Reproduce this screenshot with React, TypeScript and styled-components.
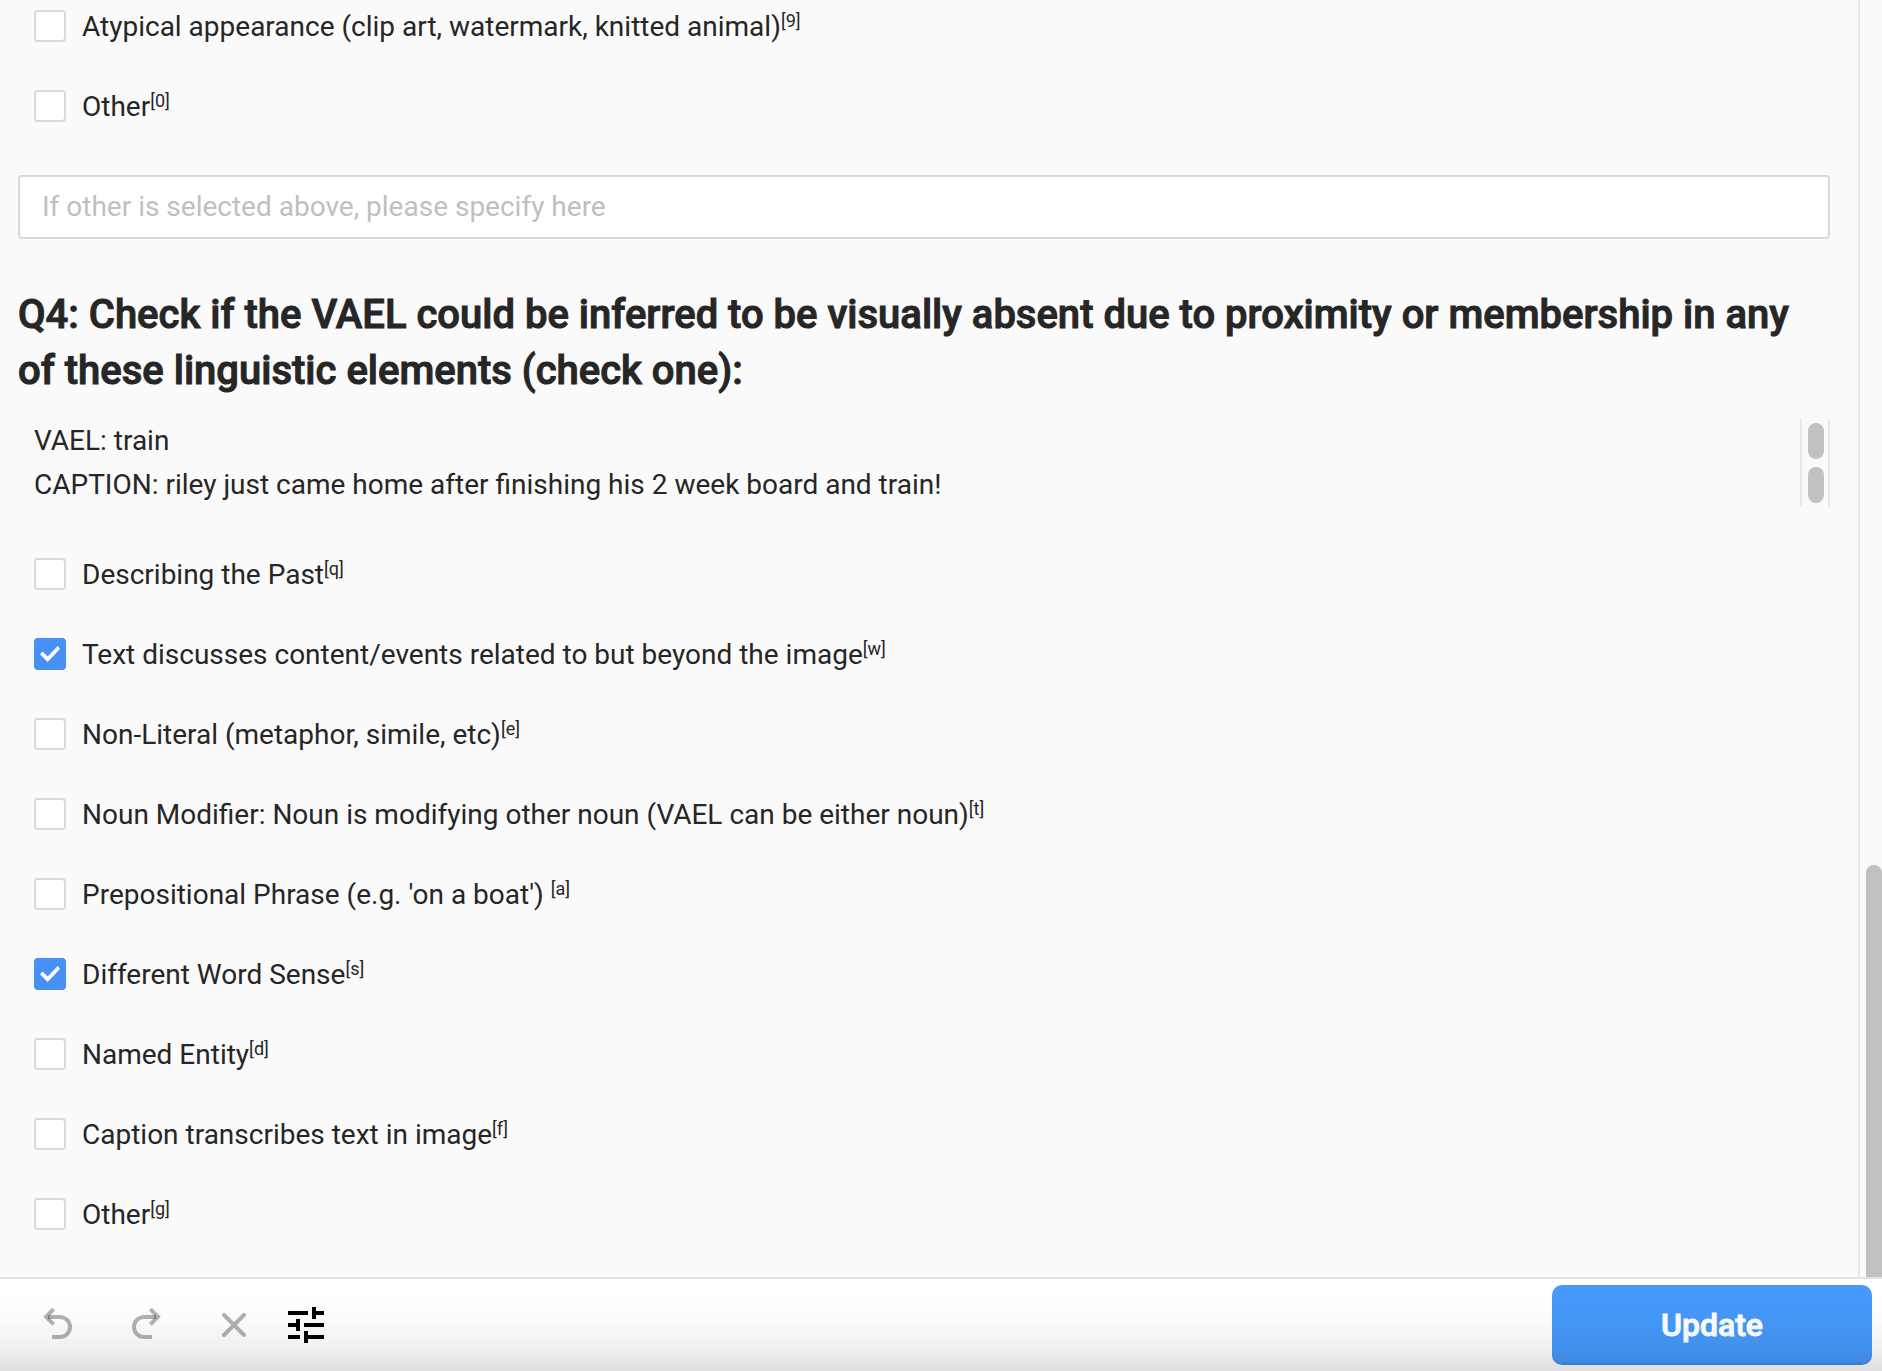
import React, { useState } from "react";
import styled, { createGlobalStyle } from "styled-components";

const GlobalStyle = createGlobalStyle`
  *, *::before, *::after { box-sizing: border-box; }
  body {
    margin: 0;
    background: #fafafa;
    color: #262626;
    font-family: Roboto, "Liberation Sans", sans-serif;
    font-size: 28px;
    line-height: 44px;
  }
`;

const Page = styled.div`
  display: flex;
  flex-direction: column;
  height: 100vh;
  overflow: hidden;
`;

const Workspace = styled.div`
  display: flex;
  flex: 1;
  min-height: 0;
`;

const Form = styled.main`
  flex: 1;
  min-width: 0;
  overflow: hidden;
  padding: 10px 28px 0 18px;
`;

const ScrollRail = styled.div`
  display: flex;
  flex-direction: column;
  justify-content: flex-end;
  align-items: flex-end;
  width: 24px;
  border-left: 2px solid #e7e7e7;
`;

const ScrollThumb = styled.div`
  width: 16px;
  height: 32.3%;
  border-radius: 8px 8px 0 0;
  background: #c1c1c1;
`;

const Choices = styled.ul`
  display: flex;
  flex-direction: column;
  gap: 48px;
  margin: 0;
  padding: 0 16px;
  list-style: none;
`;

const Choice = styled.label`
  display: flex;
  align-items: center;
  gap: 16px;
  height: 32px;
  cursor: pointer;
`;

const ChoiceText = styled.span`
  padding-top: 2px;
  white-space: pre-wrap;
`;

const Tick = styled.input`
  appearance: none;
  display: grid;
  place-items: center;
  flex: none;
  width: 32px;
  height: 32px;
  margin: 0;
  border: 2px solid #d9d9d9;
  border-radius: 4px;
  background: #fff;

  &:checked {
    border-color: #4690f7;
    background: #4690f7;
  }

  &:checked::after {
    content: "";
    width: 20px;
    height: 16px;
    background: #fff;
    clip-path: polygon(0 52%, 13% 35%, 38% 66%, 89% 0, 100% 18%, 38% 100%);
  }
`;

const Hotkey = styled.sup`
  font-size: 18px;
  line-height: 0;
  vertical-align: 9px;
`;

const OtherInput = styled.input`
  display: block;
  width: 100%;
  height: 64px;
  margin: 53px 0 48px;
  padding: 0 22px 2px;
  border: 2px solid #d9d9d9;
  border-radius: 4px;
  background: #fff;
  color: inherit;
  font: inherit;

  &::placeholder {
    color: #bfbfbf;
    opacity: 1;
  }
`;

const Question = styled.h1`
  margin: 0 0 20px;
  font-size: 40px;
  font-weight: 500;
  line-height: 56px;
  -webkit-text-stroke: 1px currentColor;
`;

const Lines = styled.div`
  margin-bottom: 51px;
`;

const Line = styled.div`
  display: flex;
  justify-content: space-between;
  height: 44px;
  padding-left: 16px;
`;

const LineRail = styled.div`
  width: 30px;
  padding: 4px 4px 4px 6px;
  border: solid #e8e8e8;
  border-width: 0 2px;
`;

const LineThumb = styled.div`
  width: 16px;
  height: 36px;
  border-radius: 8px;
  background: #c1c1c1;
`;

const Footer = styled.footer`
  position: relative;
  display: flex;
  align-items: center;
  justify-content: space-between;
  height: 94px;
  padding: 0 10px 0 22px;
  border-top: 2px solid #e3e3e3;
  background: #fff;

  &::after {
    content: "";
    position: absolute;
    inset: 0;
    background: linear-gradient(
      rgba(0, 0, 0, 0) 15%,
      rgba(0, 0, 0, 0.02) 45%,
      rgba(0, 0, 0, 0.06) 75%,
      rgba(0, 0, 0, 0.13) 100%
    );
    pointer-events: none;
  }
`;

const Tools = styled.div`
  display: flex;
  align-items: center;
`;

const History = styled.div`
  display: flex;
  gap: 16px;
`;

const ToolButton = styled.button`
  display: grid;
  place-items: center;
  width: 72px;
  height: 64px;
  padding: 0;
  border: 0;
  background: none;
  color: #000;

  &:disabled {
    color: rgba(0, 0, 0, 0.3);
  }
`;

const Submit = styled.button`
  width: 320px;
  height: 80px;
  border: 0;
  border-radius: 10px;
  background: #4599fa;
  box-shadow: inset 0 -2px 0 rgba(0, 0, 0, 0.08);
  color: #fff;
  font: 500 32px/40px Roboto, "Liberation Sans", sans-serif;
  -webkit-text-stroke: 1px currentColor;
`;

type Option = { text: string; hotkey: string; checked?: boolean };

const appearance: Option[] = [
  { text: "Atypical appearance (clip art, watermark, knitted animal)", hotkey: "9" },
  { text: "Other", hotkey: "0" },
];

const linguistic: Option[] = [
  { text: "Describing the Past", hotkey: "q" },
  { text: "Text discusses content/events related to but beyond the image", hotkey: "w", checked: true },
  { text: "Non-Literal (metaphor, simile, etc)", hotkey: "e" },
  { text: "Noun Modifier: Noun is modifying other noun (VAEL can be either noun)", hotkey: "t" },
  { text: "Prepositional Phrase (e.g. 'on a boat') ", hotkey: "a" },
  { text: "Different Word Sense", hotkey: "s", checked: true },
  { text: "Named Entity", hotkey: "d" },
  { text: "Caption transcribes text in image", hotkey: "f" },
  { text: "Other", hotkey: "g" },
];

const details = [
  "VAEL: train",
  "CAPTION: riley just came home after finishing his 2 week board and train!",
];

function ChoiceItem({ option }: { option: Option }) {
  const [checked, setChecked] = useState(Boolean(option.checked));
  return (
    <li>
      <Choice>
        <Tick type="checkbox" checked={checked} onChange={() => setChecked(!checked)} />
        <ChoiceText>
          {option.text}
          <Hotkey>[{option.hotkey}]</Hotkey>
        </ChoiceText>
      </Choice>
    </li>
  );
}

function ChoiceList({ options }: { options: Option[] }) {
  return (
    <Choices>
      {options.map((option) => (
        <ChoiceItem key={option.hotkey} option={option} />
      ))}
    </Choices>
  );
}

const UndoIcon = ({ flipped }: { flipped?: boolean }) => (
  <svg width="32" height="36" viewBox="0 0 32 36" fill="none" stroke="currentColor" strokeWidth="4">
    <g transform={flipped ? "matrix(-1 0 0 1 32 0)" : undefined}>
      <path d="M11.6 2.2 4.1 9.8l7.5 7.600" />
      <path d="M6 10h12a10 10 0 0 1 0 20h-8" />
    </g>
  </svg>
);

export default function App() {
  return (
    <>
      <GlobalStyle />
      <Page>
        <Workspace>
          <Form>
            <ChoiceList options={appearance} />
            <OtherInput
              type="text"
              aria-label="Other"
              placeholder="If other is selected above, please specify here"
            />
            <Question>
              Q4: Check if the VAEL could be inferred to be visually absent due to proximity or
              membership in any of these linguistic elements (check one):
            </Question>
            <Lines>
              {details.map((line) => (
                <Line key={line}>
                  {line}
                  <LineRail>
                    <LineThumb />
                  </LineRail>
                </Line>
              ))}
            </Lines>
            <ChoiceList options={linguistic} />
          </Form>
          <ScrollRail>
            <ScrollThumb />
          </ScrollRail>
        </Workspace>
        <Footer>
          <Tools>
            <History>
              <ToolButton type="button" aria-label="Undo" disabled>
                <UndoIcon />
              </ToolButton>
              <ToolButton type="button" aria-label="Redo" disabled>
                <UndoIcon flipped />
              </ToolButton>
              <ToolButton type="button" aria-label="Reset" disabled>
                <svg width="24" height="24" viewBox="0 0 24 24" stroke="currentColor" strokeWidth="4" strokeLinecap="round">
                  <path d="M2 2l20 20M22 2L2 22" />
                </svg>
              </ToolButton>
            </History>
            <ToolButton type="button" aria-label="Settings">
              <svg width="36" height="36" viewBox="0 0 36 36" fill="currentColor">
                <path d="M0 4h20v4H0zM24 0h4v4h8v4h-8v4h-4zM0 16h8v-4h4v12H8v-4H0zM16 16h20v4H16zM0 28h12v4H0zM16 24h4v4h16v4H20v4h-4z" />
              </svg>
            </ToolButton>
          </Tools>
          <Submit type="button">Update</Submit>
        </Footer>
      </Page>
    </>
  );
}
